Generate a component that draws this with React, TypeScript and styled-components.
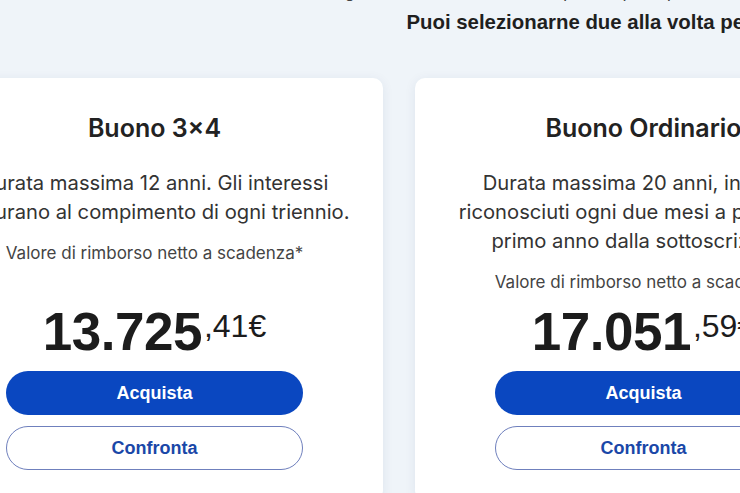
import React from "react";
import styled, { createGlobalStyle } from "styled-components";

const Global = createGlobalStyle`
  html, body { margin: 0; padding: 0; }
  body {
    background: #eff4f9;
    font-family: Inter, "Noto Sans", sans-serif;
    color: #222;
    overflow: hidden;
    width: 740px;
    height: 493px;
  }
`;

const Stage = styled.div`
  width: 1435px;
  margin-left: -74px;
  display: flex;
  flex-direction: column;
`;

const Header = styled.header`
  display: flex;
  flex-direction: column;
  align-items: center;
  margin-top: -20px;
  height: 98px;
`;

const Lead = styled.p`
  margin: 0 0 3px;
  font-size: 17px;
  line-height: 26px;
  color: #444;
  font-family: "Liberation Sans", Arial, sans-serif;
`;

const Hint = styled.p`
  margin: 0;
  padding-right: 4px;
  font-size: 20.4px;
  line-height: 26px;
  font-weight: 700;
  color: #1f1f1f;
  font-family: "Liberation Sans", Arial, sans-serif;
`;

const Row = styled.div`
  display: flex;
  gap: 32px;
  align-items: stretch;
`;

const Card = styled.article`
  width: 457px;
  box-sizing: border-box;
  background: #ffffff;
  border-radius: 10px;
  box-shadow: 0 2px 12px rgba(20, 50, 100, 0.08);
  padding: 36px 80px 30px;
  display: flex;
  flex-direction: column;
  align-items: stretch;
  text-align: center;
`;

const Title = styled.h2`
  margin: 0;
  font-size: 25px;
  line-height: 28px;
  font-weight: 600;
  color: #222;
  white-space: nowrap;
`;

const Desc = styled.p`
  margin: 26px -59px 0;
  font-size: 20.2px;
  line-height: 29px;
  color: #333;
`;

const Note = styled.p`
  margin: 16px -60px 0;
  font-size: 17px;
  line-height: 22px;
  color: #444;
  white-space: nowrap;
`;

const Bottom = styled.div`
  margin-top: auto;
  padding-top: 9px;
  display: flex;
  flex-direction: column;
  gap: 11px;
`;

const Price = styled.div`
  display: flex;
  justify-content: center;
  align-items: flex-start;
  height: 60px;
  margin-bottom: -2px;
  font-family: "Liberation Sans", Arial, sans-serif;
  color: #1c1c1c;
`;

const Int = styled.span`
  font-size: 53px;
  line-height: 60px;
  font-weight: 700;
  letter-spacing: -0.5px;
`;

const Dec = styled.span`
  font-size: 32px;
  line-height: 32px;
  font-weight: 400;
  margin-left: 2px;
  margin-top: 8px;
`;

const Button = styled.button<{ $primary?: boolean }>`
  height: 44px;
  border-radius: 22px;
  font-family: "Liberation Sans", Arial, sans-serif;
  font-size: 18px;
  font-weight: 700;
  cursor: pointer;
  box-sizing: border-box;
  background: ${(p) => (p.$primary ? "#0a47c0" : "#ffffff")};
  color: ${(p) => (p.$primary ? "#ffffff" : "#1a47a8")};
  border: ${(p) => (p.$primary ? "none" : "1px solid #6f80bd")};
`;

type Offer = {
  title: string;
  desc: string;
  int: string;
  dec: string;
};

const offers: Offer[] = [
  {
    title: "Buono 3×4",
    desc: "Durata massima 12 anni. Gli interessi maturano al compimento di ogni triennio.",
    int: "13.725",
    dec: ",41€",
  },
  {
    title: "Buono Ordinario",
    desc: "Durata massima 20 anni, interessi riconosciuti ogni due mesi a partire dal primo anno dalla sottoscrizione.",
    int: "17.051",
    dec: ",59€",
  },
  {
    title: "Buono 4 anni Plus",
    desc: "Durata 4 anni. Gli interessi sono riconosciuti a scadenza.",
    int: "11.040",
    dec: ",80€",
  },
];

export default function App() {
  return (
    <>
      <Global />
      <Stage>
        <Header>
          <Lead>Scegli tra i diversi Buoni fruttiferi postali quello più adatto alle tue esigenze di risparmio.</Lead>
          <Hint>Puoi selezionarne due alla volta per confrontarli.</Hint>
        </Header>
        <Row>
          {offers.map((o) => (
            <Card key={o.title}>
              <Title>{o.title}</Title>
              <Desc>{o.desc}</Desc>
              <Note>Valore di rimborso netto a scadenza*</Note>
              <Bottom>
                <Price>
                  <Int>{o.int}</Int>
                  <Dec>{o.dec}</Dec>
                </Price>
                <Button $primary>Acquista</Button>
                <Button>Confronta</Button>
              </Bottom>
            </Card>
          ))}
        </Row>
      </Stage>
    </>
  );
}
